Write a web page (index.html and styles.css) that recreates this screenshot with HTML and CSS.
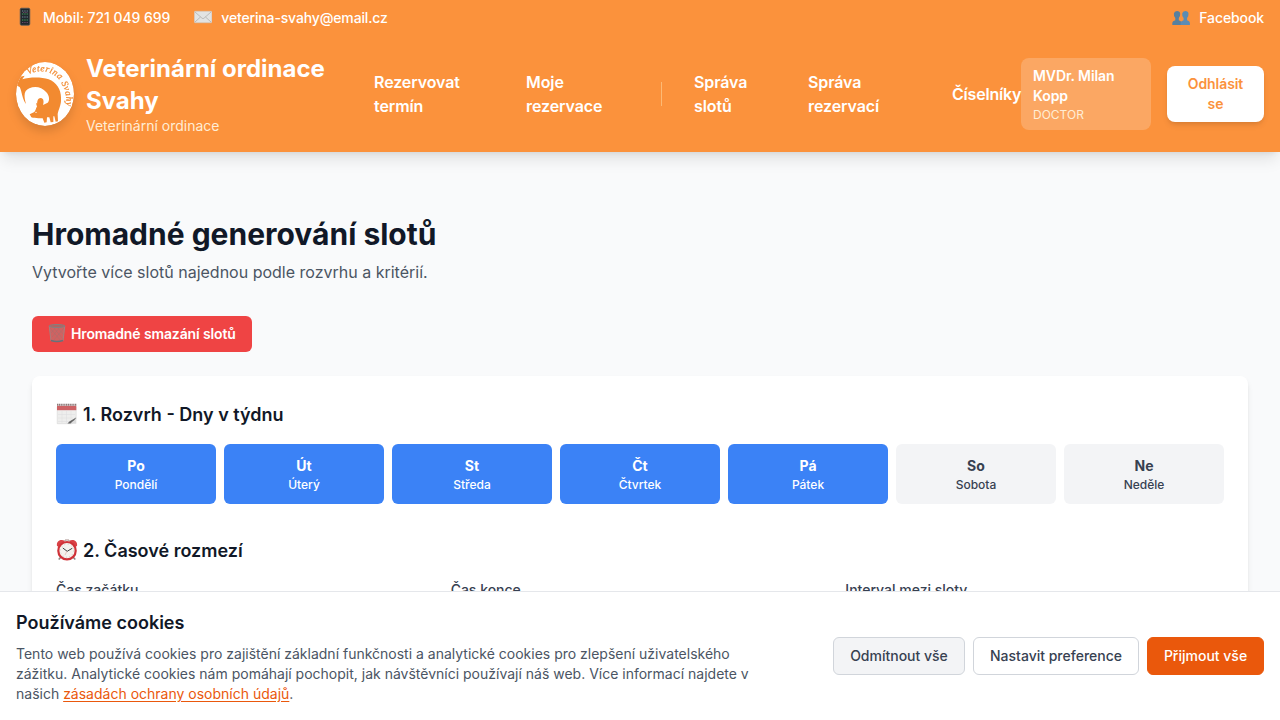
FILE: index.html
```html
<!DOCTYPE html>
<html lang="cs">
<head>
<meta charset="utf-8">
<title>Veterinární ordinace Svahy</title>
<link rel="stylesheet" href="styles.css">
</head>
<body>
<header class="header">
  <div class="topbar">
    <div class="contacts">
      <span class="contact tel"><svg class="ico phone" viewBox="0 0 18 20"><rect x="4.2" y="1.2" width="9.6" height="17" rx="1.2" fill="#20282d" stroke="#555b5d" stroke-width=".8"/><path d="M6 4h6M6 10h6" stroke="#596a78" stroke-width="1.4" stroke-dasharray="1.3 1"/><path d="M6 7h6M6 13h6" stroke="#397b50" stroke-width="1.4" stroke-dasharray="1.3 1"/><path d="M7 5.5h5M6 15.5h6" stroke="#6b4768" stroke-width="1.2" stroke-dasharray="1.3 1"/></svg>Mobil: 721 049 699</span>
      <span class="contact email"><svg class="ico mail" viewBox="0 0 18 20"><rect x=".3" y="4.2" width="17.6" height="11.6" rx=".8" fill="#e2e3e3" stroke="#c6c1ba" stroke-width=".5"/><path d="M1 5l7 6.2q1 .8 2 0L17 5M1 15l5.5-5M17 15l-5.5-5" fill="none" stroke="#aaa9a7" stroke-width=".7"/></svg>veterina-svahy@email.cz</span>
    </div>
    <span class="contact social"><svg class="ico people" viewBox="0 0 18 20"><g fill="#56809f"><path d="M.3 18v-2.2q.2-1.8 3-2.5V11Q1.5 9 1.9 6.5T5 4q3 0 3.2 2.7T6.8 11v2.3q2.5.6 2.7 2.5V18z"/><path fill="#5b8cb4" d="M8.6 18v-2.2q.2-1.8 3-2.5V11q-1.8-2-1.4-4.5T13.3 4q3 0 3.2 2.7T15.1 11v2.3q2.6.6 2.8 2.5V18z"/></g></svg>Facebook</span>
  </div>
  <div class="mainbar">
    <div class="brand">
      <svg class="logo" viewBox="24 24 174 192">
        <defs><clipPath id="disc"><ellipse cx="111" cy="120" rx="87" ry="96"/></clipPath><path id="arc" d="M60 62C102 40 148 56 164 95C180 130 178 154 167 182"/></defs>
        <ellipse cx="111" cy="120" rx="87" ry="96" fill="#fff"/>
        <g clip-path="url(#disc)">
          <path fill="#f28a30" d="M20 86C28 83 35 76 37 68L50 65L43 76C64 69 99 68 122 76C146 85 160 108 159 134C160 154 152 165 149 180L150 202L143 203L139 187L136 187L136 204L128 205L124 190L117 190L116 205L109 206L104 193C91 192 79 194 70 190L65 181L79 174C84 168 83 162 87 158L84 147L96 153L105 153L119 146C125 139 125 126 115 115C101 98 80 96 64 103C49 109 46 122 54 150C42 135 42 112 35 99L20 92Z"/>
          <path fill="#f28a30" d="M88 160C86 143 88 133 98 132C107 133 108 141 105 154Z"/>
          <circle cx="84" cy="175" r="2" fill="#fff"/>
        </g>
        <text class="logo-text"><textPath href="#arc" textLength="186">Veterina Svahy</textPath></text>
      </svg>
      <div class="brand-copy"><div class="brand-name">Veterinární ordinace Svahy</div><div class="brand-sub">Veterinární ordinace</div></div>
    </div>
    <nav class="nav">
      <a class="nav-book">Rezervovat termín</a>
      <a class="nav-mine">Moje rezervace</a>
      <i class="divider"></i>
      <a class="nav-slots">Správa slotů</a>
      <a class="nav-admin">Správa rezervací</a>
      <a class="nav-codes">Číselníky</a>
    </nav>
    <div class="user"><div class="user-name">MVDr. Milan Kopp</div><div class="user-role">DOCTOR</div></div>
    <button class="logout">Odhlásit se</button>
  </div>
</header>
<main class="main">
  <h1 class="title">Hromadné generování slotů</h1>
  <p class="lead">Vytvořte více slotů najednou podle rozvrhu a kritérií.</p>
  <button class="delete"><svg class="trash" viewBox="0 0 18 20"><path d="M1 3l2 15q6 2 12 0l2-15z" fill="#b77c7a" fill-opacity=".55"/><path d="M2 5l11 13M5 4l10 12M9 4l7 8M16 5L5 18M12 4L4 14M8 4L3 10" stroke="#a27070" stroke-width=".5"/><path d="M1.2 3L3 18M16.8 3L15 18" stroke="#a18381" stroke-width=".9"/><ellipse cx="9" cy="3" rx="8" ry="1.5" fill="#af6663" stroke="#858080" stroke-width="1"/><path d="M3 17.5q6 2 12 0" fill="none" stroke="#66717a" stroke-width="1.5"/></svg>Hromadné smazání slotů</button>
  <section class="card">
    <h2 class="heading"><svg class="hicon" viewBox="0 0 22 22"><path d="M1.2 4h19v12l-4 4.7h-15z" fill="#eeeeed" stroke="#d1d1d0" stroke-width=".5"/><path d="M2 11.5h17M2 15h15M2 18.5h12M6 8v12M10.5 8v12M15 8v10" stroke="#ddddde" stroke-width=".5"/><path d="M1 2.8h19.3v4.4H1z" fill="#cd6265"/><path d="M1 1.8h19.3" stroke="#8b7979" stroke-width="2" stroke-dasharray="1.3 .5"/><path d="M11 20.8c4-1 7-3 9.3-6.8v6.8z" fill="#ddd"/><path d="M11.5 20.5c2.6-3 5.1-3.8 8.5-6-.7 3-3.6 3.5-5.5 6z" fill="#666"/></svg>1. Rozvrh - Dny v týdnu</h2>
    <div class="days">
      <button class="day on"><b>Po</b><span>Pondělí</span></button>
      <button class="day on"><b>Út</b><span>Úterý</span></button>
      <button class="day on"><b>St</b><span>Středa</span></button>
      <button class="day on"><b>Čt</b><span>Čtvrtek</span></button>
      <button class="day on"><b>Pá</b><span>Pátek</span></button>
      <button class="day"><b>So</b><span>Sobota</span></button>
      <button class="day"><b>Ne</b><span>Neděle</span></button>
    </div>
    <h2 class="heading"><svg class="hicon" viewBox="0 0 22 22"><path d="M5 18l-2.3 2.5M17 18l2.3 2.5" stroke="#8b8582" stroke-width="1.6"/><path d="M1 7C0 2 5-.5 9 2L3 8zM21 7c1-5-4-7.5-8-5l6 6z" fill="#d94145"/><path d="M9 2.5V1h4v1.5" fill="none" stroke="#a98e8a"/><circle cx="11" cy="11.7" r="8.7" fill="#f4f2ed" stroke="#cf3238" stroke-width="2.2"/><circle cx="11" cy="11.7" r="6.5" fill="none" stroke="#b8b3ac" stroke-width=".8" stroke-dasharray=".7 2.7"/><path d="M6.8 9l4.4 3.3 5-3" fill="none" stroke="#3d4545" stroke-width="1"/><path d="M11 12l-2 4" stroke="#d69a93" stroke-width=".5"/></svg>2. Časové rozmezí</h2>
    <div class="fields"><label>Čas začátku</label><label>Čas konce</label><label>Interval mezi sloty</label></div>
  </section>
</main>
<aside class="cookies">
  <div class="cookie-copy"><h3>Používáme cookies</h3><p>Tento web používá cookies pro zajištění základní funkčnosti a analytické cookies pro zlepšení uživatelského zážitku. Analytické cookies nám pomáhají pochopit, jak návštěvníci používají náš web. Více informací najdete v našich <a>zásadách ochrany osobních údajů</a>.</p></div>
  <div class="actions"><button class="btn reject">Odmítnout vše</button><button class="btn prefs">Nastavit preference</button><button class="btn accept">Přijmout vše</button></div>
</aside>
</body>
</html>
```
FILE: styles.css
```css
* { box-sizing: border-box; margin: 0; padding: 0; }
html, body { height: 100%; overflow: hidden; }
body { font: 16px/24px Inter, sans-serif; color: #111827; background: #f9fafb; }
button { font: inherit; border: 0; }
svg { display: block; flex: none; }
.header { position: relative; height: 152px; color: #fff; background: #fb923c; box-shadow: 0 10px 15px -3px rgba(0,0,0,.1), 0 4px 6px -4px rgba(0,0,0,.1); }
.topbar { height: 36px; padding: 8px 16px; display: flex; justify-content: space-between; font-size: 14px; line-height: 20px; font-weight: 500; }
.contacts { display: flex; gap: 24px; }
.contact { display: flex; align-items: center; gap: 9px; }
.tel { letter-spacing: -.06px; }
.email { letter-spacing: -.15px; }
.social { letter-spacing: -.1px; }
.ico { width: 18px; height: 20px; margin-top: -2px; }
.mainbar { height: 116px; padding: 16px; display: flex; align-items: center; }
.brand { width: 358px; flex: none; display: flex; align-items: center; gap: 12px; }
.logo { width: 58px; height: 64px; border-radius: 50%; filter: drop-shadow(0 6px 5px rgba(0,0,0,.13)); }
.logo-text { font: italic 28px "Liberation Serif", serif; fill: #f28a30; stroke: #f28a30; stroke-width: .7px; }
.brand-copy { width: 256px; }
.brand-name { padding-top: 1px; margin-bottom: -1px; font-size: 24px; line-height: 32px; font-weight: 700; }
.brand-sub { font-size: 14px; line-height: 20px; color: #ffedd5; }
.nav { width: 647px; flex: none; display: flex; align-items: center; font-weight: 600; letter-spacing: -.1px; }
.nav-book { width: 104px; margin-right: 48px; }
.nav-mine { width: 103px; margin-right: 32px; }
.divider { width: 1px; height: 24px; margin-right: 32px; background: #fdba74; }
.nav-slots { width: 66px; margin-right: 48px; }
.nav-admin { width: 96px; margin-right: 48px; }
.nav-codes { white-space: nowrap; letter-spacing: -.2px; }
.nav a, .divider { flex: none; }
.user { width: 130px; height: 72px; margin-right: 16px; padding: 8px 12px; flex: none; border-radius: 8px; background: rgba(255,255,255,.2); }
.user-name { width: 90px; font-size: 14px; line-height: 20px; font-weight: 600; letter-spacing: -.08px; }
.user-role { padding-top: 1px; font-size: 12px; line-height: 16px; color: #ffedd5; }
.logout { width: 97px; height: 56px; padding: 8px 20px; flex: none; border-radius: 8px; color: #fb923c; background: #fff; font-size: 14px; line-height: 20px; font-weight: 600; letter-spacing: -.08px; box-shadow: 0 4px 6px -1px rgba(0,0,0,.1), 0 2px 4px -2px rgba(0,0,0,.1); }
.main { padding: 64px 32px 0; }
.title { font-size: 30px; line-height: 36px; font-weight: 700; }
.lead { margin-top: 8px; color: #4b5563; }
.delete { display: flex; align-items: center; gap: 5px; width: 220px; height: 36px; margin-top: 32px; padding-left: 16px; border-radius: 6px; color: #fff; background: #ef4444; font-size: 14px; font-weight: 600; letter-spacing: -.12px; white-space: nowrap; }
.trash { width: 18px; height: 20px; margin-top: -2px; }
.card { margin-top: 24px; padding: 24px; height: 344px; border-radius: 8px; background: #fff; box-shadow: 0 4px 6px -1px rgba(0,0,0,.1), 0 2px 4px -2px rgba(0,0,0,.1); }
.heading { height: 28px; padding-top: 1px; display: flex; align-items: center; gap: 5px; font-size: 18px; line-height: 28px; font-weight: 600; }
.hicon { width: 22px; height: 22px; margin-top: -1px; }
.days { margin: 16px 0 32px; display: grid; grid-template-columns: repeat(7, 1fr); gap: 8px; }
.day { height: 60px; display: flex; flex-direction: column; align-items: center; justify-content: center; border-radius: 6px; color: #374151; background: #f3f4f6; }
.day.on { color: #fff; background: #3b82f6; }
.day b { font-size: 14px; line-height: 20px; font-weight: 700; }
.day span { padding-top: 1px; margin-bottom: -1px; font-size: 12px; line-height: 16px; font-weight: 500; }
.fields { margin-top: 16px; display: grid; grid-template-columns: repeat(3, 1fr); gap: 16px; color: #374151; font-size: 14px; line-height: 20px; font-weight: 500; }
.cookies { position: fixed; inset: auto 0 0; height: 129px; padding: 16px; display: flex; align-items: center; justify-content: space-between; border-top: 1px solid #e5e7eb; background: #fff; }
.cookie-copy { width: 752px; }
.cookie-copy h3 { height: 28px; padding-top: 1px; font-size: 18px; line-height: 28px; font-weight: 600; margin-bottom: 8px; }
.cookie-copy p { font-size: 14px; line-height: 20px; color: #4b5563; }
.cookie-copy a { color: #ea580c; text-decoration: underline; text-underline-offset: 2px; }
.actions { display: flex; gap: 8px; }
.btn { height: 38px; border: 1px solid #d1d5db; border-radius: 6px; color: #374151; background: #fff; font-size: 14px; font-weight: 500; white-space: nowrap; }
.reject { width: 132px; background: #f3f4f6; }
.prefs { width: 166px; }
.accept { width: 117px; color: #fff; background: #ea580c; border-color: #ea580c; }
```
